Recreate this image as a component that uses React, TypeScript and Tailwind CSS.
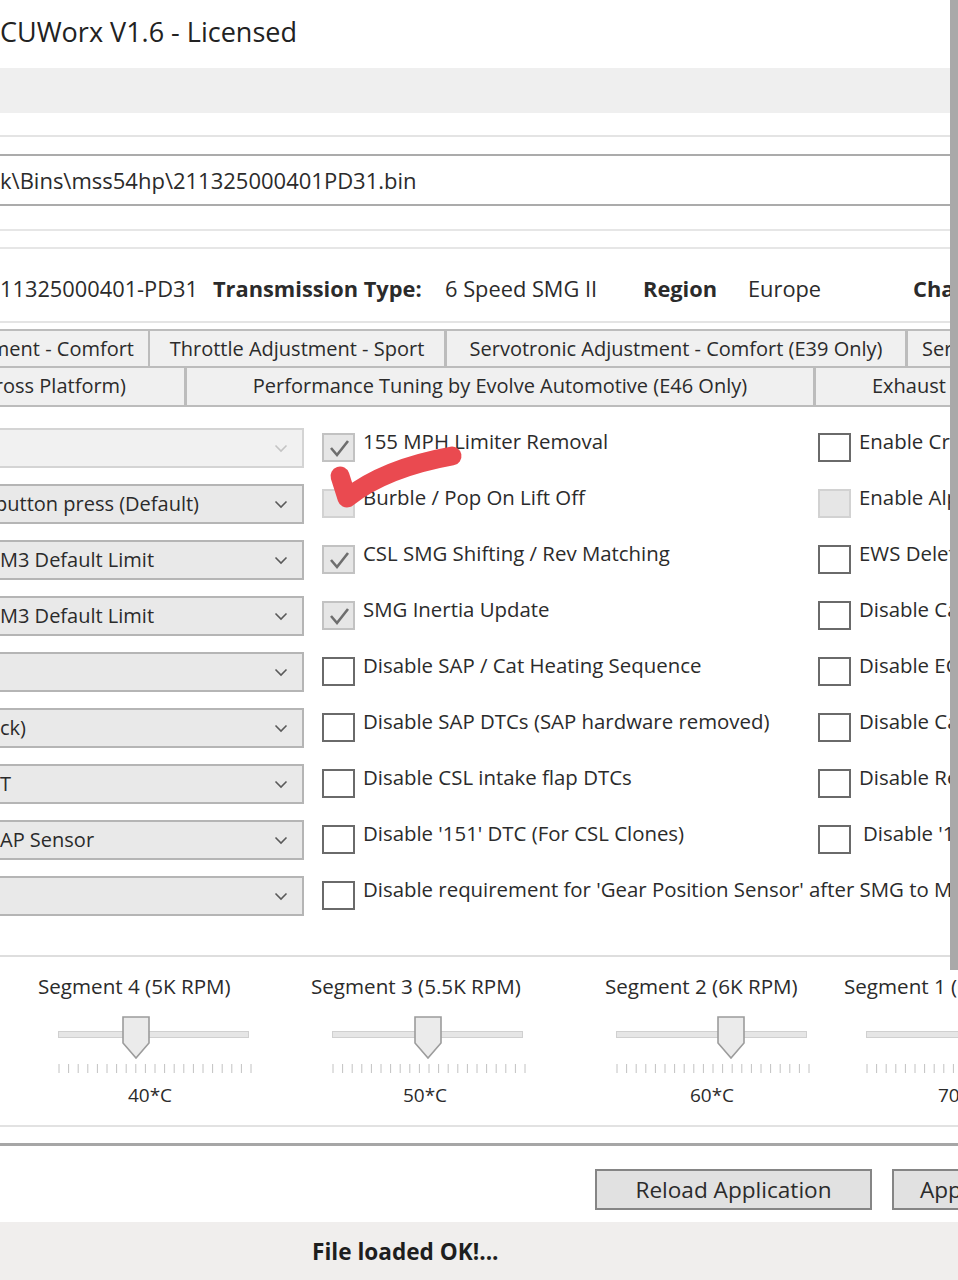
import React from "react";

type BoxState = "checked" | "empty" | "disabled";

const combos: { text: string; disabled?: boolean; shift?: boolean }[] = [
  { text: "", disabled: true },
  { text: "button press (Default)", shift: true },
  { text: "M3 Default Limit" },
  { text: "M3 Default Limit" },
  { text: "" },
  { text: "ck)" },
  { text: "T" },
  { text: "AP Sensor" },
  { text: "" },
];

const middle: { label: string; state: BoxState }[] = [
  { label: "155 MPH Limiter Removal", state: "checked" },
  { label: "Burble / Pop On Lift Off", state: "disabled" },
  { label: "CSL SMG Shifting / Rev Matching", state: "checked" },
  { label: "SMG Inertia Update", state: "checked" },
  { label: "Disable SAP / Cat Heating Sequence", state: "empty" },
  { label: "Disable SAP DTCs (SAP hardware removed)", state: "empty" },
  { label: "Disable CSL intake flap DTCs", state: "empty" },
  { label: "Disable '151' DTC (For CSL Clones)", state: "empty" },
  {
    label: "Disable requirement for 'Gear Position Sensor' after SMG to Manual conversion",
    state: "empty",
  },
];

const right: ({ label: string; state: BoxState; nudge?: boolean } | null)[] = [
  { label: "Enable Cruise Control", state: "empty" },
  { label: "Enable Alpha-N", state: "disabled" },
  { label: "EWS Delete", state: "empty" },
  { label: "Disable Cat Monitoring", state: "empty" },
  { label: "Disable EGR", state: "empty" },
  { label: "Disable Cat DTCs", state: "empty" },
  { label: "Disable Rear O2", state: "empty" },
  { label: "Disable '10' DTC", state: "empty", nudge: true },
  null,
];

const segments = [
  { label: "Segment 4 (5K RPM)", value: "40*C", col: "w-[273px]", track: "ml-[20px]", val: "ml-[72px]", thumb: 78 },
  { label: "Segment 3 (5.5K RPM)", value: "50*C", col: "w-[294px]", track: "ml-[21px]", val: "ml-[74px]", thumb: 96 },
  { label: "Segment 2 (6K RPM)", value: "60*C", col: "w-[239px]", track: "ml-[11px]", val: "ml-[67px]", thumb: 115 },
  { label: "Segment 1 (6.5K RPM)", value: "70*C", col: "w-[260px]", track: "ml-[22px]", val: "ml-[76px]", thumb: 130 },
];

function Chevron({ light }: { light?: boolean }) {
  return (
    <svg width="14" height="9" viewBox="0 0 14 9" className="shrink-0">
      <path
        d="M1.5 1.5 L7 7 L12.5 1.5"
        fill="none"
        stroke={light ? "#c4c4c4" : "#5a5a5a"}
        strokeWidth="1.6"
      />
    </svg>
  );
}

function Combo({ text, disabled, shift }: { text: string; disabled?: boolean; shift?: boolean }) {
  return (
    <div
      className={`flex h-[40px] w-[304px] shrink-0 items-center border-2 border-l-0 pr-[14px] ${
        disabled ? "border-[#d4d4d4] bg-[#f1f1f1]" : "border-[#b5b5b5] bg-[#e9e9e9]"
      }`}
    >
      <span
        className={`flex-1 overflow-hidden whitespace-nowrap text-[20px] ${
          shift ? "-ml-[5px]" : ""
        }`}
      >
        {text}
      </span>
      <Chevron light={disabled} />
    </div>
  );
}

function Box({ state }: { state: BoxState }) {
  if (state === "checked")
    return (
      <div className="flex h-[29px] w-[33px] shrink-0 items-center justify-center border-2 border-[#c2c2c2] bg-[#e6e6e6]">
        <svg width="24" height="20" viewBox="0 0 24 20">
          <path d="M4 10 L10 17 L21 3" fill="none" stroke="#6e6e6e" strokeWidth="2.6" />
        </svg>
      </div>
    );
  if (state === "disabled")
    return <div className="h-[29px] w-[33px] shrink-0 border-2 border-[#d2d2d2] bg-[#e6e6e6]" />;
  return <div className="h-[29px] w-[33px] shrink-0 border-2 border-[#6a6a6a] bg-white" />;
}

function Check({ label, state, nudge }: { label: string; state: BoxState; nudge?: boolean }) {
  return (
    <div className="flex items-center">
      <Box state={state} />
      <span
        className={`whitespace-nowrap pb-[14px] text-[20.4px] ${nudge ? "ml-[12px]" : "ml-[8px]"}`}
      >
        {label}
      </span>
    </div>
  );
}

function Ticks() {
  const xs = Array.from({ length: 21 }, (_, i) => 1 + i * 9.6);
  return (
    <svg width="196" height="10" viewBox="0 0 196 10" className="mt-[6px]">
      {xs.map((x) => (
        <line key={x} x1={x} x2={x} y1="0" y2="9" stroke="#c2c2c2" strokeWidth="1" />
      ))}
    </svg>
  );
}

function Slider({ thumb }: { thumb: number }) {
  return (
    <div className="relative h-[42px] w-[191px]">
      <div className="absolute left-0 right-0 top-[15px] h-[7px] border border-[#d0d0d0] bg-[#e6e6e6]" />
      <svg
        width="28"
        height="44"
        viewBox="0 0 28 44"
        className="absolute top-0"
        style={{ left: thumb - 14 }}
      >
        <path d="M1 1 H27 V27 L14 42 L1 27 Z" fill="#ebebeb" stroke="#9c9c9c" strokeWidth="1.6" />
      </svg>
    </div>
  );
}

export default function App() {
  return (
    <div className="relative h-[1280px] w-[958px] overflow-hidden bg-white font-['Open_Sans','Noto_Sans',sans-serif] text-[#2b2b2b]">
      {/* title */}
      <div className="h-[68px] whitespace-nowrap pt-[14px] text-[27px] leading-[36px] text-[#222]">
        CUWorx V1.6 - Licensed
      </div>
      <div className="h-[45px] bg-[#efefef]" />

      {/* file path */}
      <div className="h-[22px]" />
      <div className="h-[2px] bg-[#e4e4e4]" />
      <div className="h-[17px]" />
      <div className="flex h-[52px] items-center border-y-2 border-[#ababab] whitespace-nowrap text-[22px]">
        k\Bins\mss54hp\211325000401PD31.bin
      </div>
      <div className="h-[23px]" />
      <div className="h-[2px] bg-[#e6e6e6]" />
      <div className="h-[16px]" />
      <div className="h-[2px] bg-[#e6e6e6]" />

      {/* info row */}
      <div className="flex h-[72px] items-start whitespace-nowrap pt-[25px] text-[21.8px] leading-[30px]">
        <span className="w-[213px] shrink-0">11325000401-PD31</span>
        <span className="w-[232px] shrink-0 font-bold">Transmission Type:</span>
        <span className="w-[198px] shrink-0">6 Speed SMG II</span>
        <span className="w-[105px] shrink-0 font-bold">Region</span>
        <span className="w-[165px] shrink-0">Europe</span>
        <span className="shrink-0 font-bold">Chassis</span>
      </div>
      <div className="h-[2px] bg-[#e4e4e4]" />
      <div className="h-[6px]" />

      {/* tabs */}
      <div className="flex h-[39px] whitespace-nowrap border-y-2 border-[#bcbcbc] text-[20px] leading-[35px]">
        <div className="-ml-[170px] w-[320px] shrink-0 border-r-2 border-[#bcbcbc] bg-[#f0f0f0] pr-[14px] text-right">
          Throttle Adjustment - Comfort
        </div>
        <div className="w-[297px] shrink-0 border-r-[3px] border-[#bcbcbc] bg-[#f0f0f0] text-center">
          Throttle Adjustment - Sport
        </div>
        <div className="w-[461px] shrink-0 border-r-[3px] border-[#bcbcbc] bg-[#f0f0f0] text-center">
          Servotronic Adjustment - Comfort (E39 Only)
        </div>
        <div className="w-[300px] shrink-0 bg-[#f0f0f0] pl-[14px]">Servotronic Adjustment - Sport</div>
      </div>
      <div className="flex h-[39px] whitespace-nowrap border-b-2 border-[#bcbcbc] text-[20px] leading-[36px]">
        <div className="-ml-[150px] w-[337px] shrink-0 border-r-[3px] border-[#bcbcbc] bg-[#f0f0f0] pr-[58px] text-right">
          Tuning (Cross Platform)
        </div>
        <div className="w-[629px] shrink-0 border-r-[3px] border-[#bcbcbc] bg-[#f0f0f0] text-center">
          Performance Tuning by Evolve Automotive (E46 Only)
        </div>
        <div className="w-[300px] shrink-0 bg-[#f0f0f0] pl-[56px]">Exhaust Burble</div>
      </div>

      {/* options */}
      <div className="h-[13px]" />
      <div className="flex flex-col">
        {combos.map((c, i) => {
          const r = right[i];
          return (
            <div key={i} className="flex h-[56px] items-center">
              <Combo text={c.text} disabled={c.disabled} shift={c.shift} />
              <div className="ml-[18px] w-[496px] shrink-0">
                <Check label={middle[i].label} state={middle[i].state} />
              </div>
              {r && <Check label={r.label} state={r.state} nudge={r.nudge} />}
            </div>
          );
        })}
      </div>
      <div className="h-[31px]" />
      <div className="h-[2px] bg-[#dedede]" />

      {/* segments */}
      <div className="flex whitespace-nowrap pl-[38px] pt-[17px]">
        {segments.map((s) => (
          <div key={s.label} className={`flex shrink-0 flex-col ${s.col}`}>
            <div className="h-[24px] text-[20.6px] leading-[24px]">{s.label}</div>
            <div className={`mt-[18px] ${s.track}`}>
              <Slider thumb={s.thumb} />
              <Ticks />
            </div>
            <div className={`mt-[9px] w-[80px] text-center text-[19px] leading-[24px] ${s.val}`}>
              {s.value}
            </div>
          </div>
        ))}
      </div>
      <div className="h-[18px]" />
      <div className="h-[2px] bg-[#e2e2e2]" />
      <div className="h-[16px]" />
      <div className="h-[3px] bg-[#a6a6a6]" />

      {/* buttons */}
      <div className="flex h-[76px] items-start whitespace-nowrap pl-[595px] pt-[23px] text-[22.6px]">
        <div className="flex h-[41px] w-[277px] shrink-0 items-center justify-center border-2 border-[#858585] bg-[#e1e1e1]">
          Reload Application
        </div>
        <div className="ml-[20px] flex h-[41px] w-[200px] shrink-0 items-center border-2 border-[#858585] bg-[#e1e1e1] pl-[26px]">
          Apply Changes
        </div>
      </div>

      {/* status bar */}
      <div className="flex h-[60px] items-center bg-[#f0eeed] pl-[312px] text-[22.6px] font-bold text-[#1e1e1e]">
        File loaded OK!...
      </div>

      {/* window edge */}
      <div className="absolute right-0 top-0 h-[970px] w-[8px] bg-[#a9a9a9]" />

      {/* red marker stroke */}
      <svg className="pointer-events-none absolute left-0 top-0" width="958" height="1280">
        <path
          d="M340 476 L347 498 Q385 468 452 456"
          fill="none"
          stroke="#ea4a50"
          strokeWidth="19"
          strokeLinecap="round"
          strokeLinejoin="round"
        />
      </svg>
    </div>
  );
}
